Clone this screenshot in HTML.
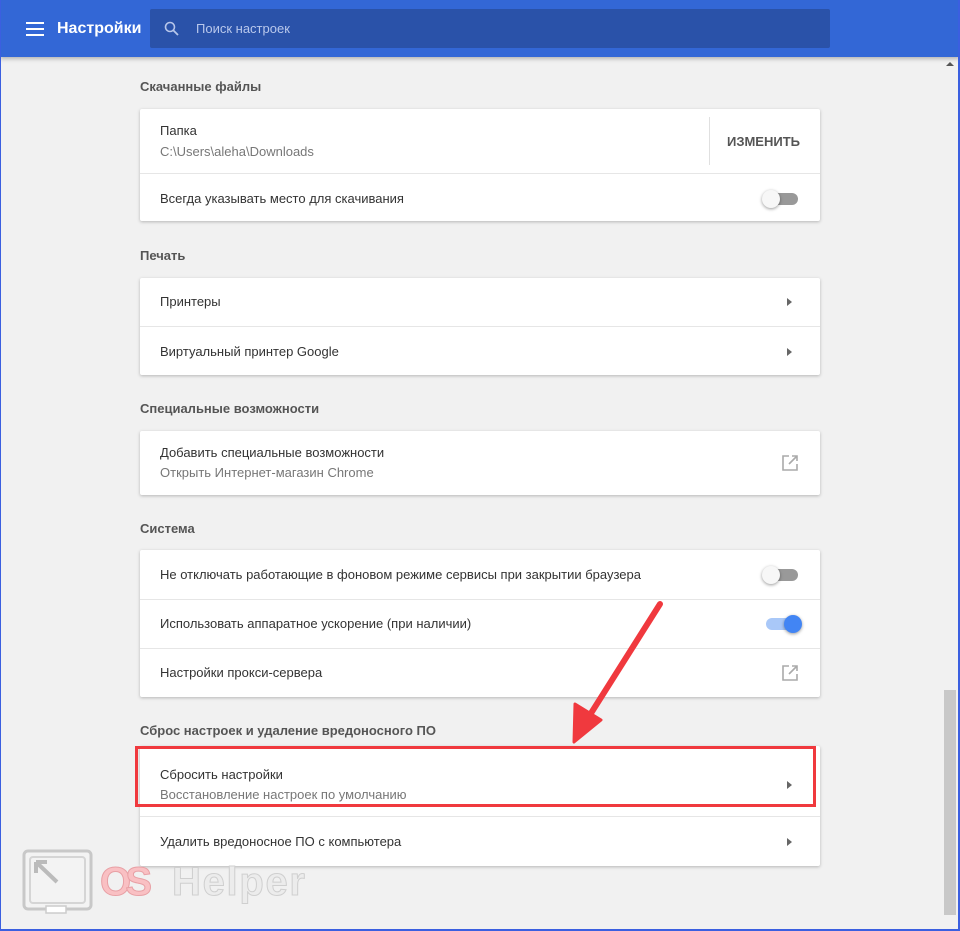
<!DOCTYPE html><html><head><meta charset="utf-8"><style>
*{margin:0;padding:0;box-sizing:border-box}
body{width:960px;height:931px;background:#f1f1f1;font-family:"Liberation Sans",sans-serif;position:relative;overflow:hidden}
.frame{position:absolute;left:0;top:0;width:960px;height:931px;border-left:1px solid #3b5fe0;border-right:2px solid #3b5fe0;border-bottom:2px solid #3b5fe0;pointer-events:none}
.hdr{position:absolute;left:0;top:0;width:960px;height:57px;background:#3367d6;box-shadow:0 2px 4px rgba(0,0,0,.25)}
.srch{position:absolute;left:150px;top:9px;width:680px;height:39px;background:#2a52a9;border-radius:2px}
.h{position:absolute;left:140px;font-size:13px;color:#555;font-weight:bold}
.card{position:absolute;left:140px;width:680px;background:#fff;box-shadow:0 1px 3px rgba(0,0,0,.25);border-radius:2px}
.row{position:relative;border-top:1px solid #e6e6e6}
.row:first-child{border-top:none}
.row .a{position:absolute;left:20px;font-size:13px;color:#333}
.row .b{position:absolute;left:20px;font-size:13px;color:#777}
.tri{position:absolute;right:28px;width:0;height:0;border-left:5px solid #666;border-top:4px solid transparent;border-bottom:4px solid transparent}
.tg{position:absolute;right:22px;width:32px;height:12px;border-radius:6px;background:#999}
.tg i{position:absolute;left:-4px;top:-3px;width:18px;height:18px;border-radius:50%;background:#f7f7f7;box-shadow:0 1px 3px rgba(0,0,0,.4)}
.on{background:#a9c8f8}.on i{left:auto;right:-4px;background:#4285f4}
.ext{position:absolute;right:22px}
</style></head><body>
<div class="hdr">
<svg style="position:absolute;left:26px;top:22px" width="18" height="14"><rect y="0" width="18" height="2" fill="#fff"/><rect y="6" width="18" height="2" fill="#fff"/><rect y="12" width="18" height="2" fill="#fff"/></svg>
<div style="position:absolute;left:57px;top:20px;font-size:16px;color:#fff;font-weight:bold">Настройки</div>
<div class="srch"><svg style="position:absolute;left:14px;top:12px" width="16" height="16"><circle cx="6" cy="6" r="4.5" stroke="#b7c6ea" stroke-width="1.6" fill="none"/><path d="M9.5 9.5L14 14" stroke="#b7c6ea" stroke-width="1.8"/></svg>
<div style="position:absolute;left:46px;top:12px;font-size:13px;color:#b9c8ec">Поиск настроек</div></div>
</div>
<div style="position:absolute;left:946px;top:62px;border-bottom:4px solid #555;border-left:4px solid transparent;border-right:4px solid transparent"></div>
<div style="position:absolute;left:944px;top:690px;width:12px;height:225px;background:#c8c8c8"></div>

<div class="h" style="top:79px">Скачанные файлы</div>
<div class="card" style="top:109px">
<div class="row" style="height:64px"><div class="a" style="top:14px">Папка</div><div class="b" style="top:35px">C:\Users\aleha\Downloads</div>
<div style="position:absolute;left:569px;top:8px;width:1px;height:48px;background:#e0e0e0"></div>
<div style="position:absolute;right:20px;top:25px;font-size:13px;color:#555;font-weight:bold">ИЗМЕНИТЬ</div></div>
<div class="row" style="height:48px"><div class="a" style="top:17px">Всегда указывать место для скачивания</div><div class="tg" style="top:19px"><i></i></div></div>
</div>

<div class="h" style="top:248px">Печать</div>
<div class="card" style="top:278px">
<div class="row" style="height:48px"><div class="a" style="top:16px">Принтеры</div><div class="tri" style="top:20px"></div></div>
<div class="row" style="height:49px"><div class="a" style="top:17px">Виртуальный принтер Google</div><div class="tri" style="top:21px"></div></div>
</div>

<div class="h" style="top:401px">Специальные возможности</div>
<div class="card" style="top:431px">
<div class="row" style="height:64px"><div class="a" style="top:14px">Добавить специальные возможности</div><div class="b" style="top:34px">Открыть Интернет-магазин Chrome</div>
<svg class="ext" style="top:24px" width="16" height="16"><path d="M7 1H1v14h14V9" fill="none" stroke="#aaa" stroke-width="1.6"/><path d="M10 1h5v5M15 1L7 9" fill="none" stroke="#aaa" stroke-width="1.6"/></svg></div>
</div>

<div class="h" style="top:521px">Система</div>
<div class="card" style="top:550px">
<div class="row" style="height:49px"><div class="a" style="top:17px">Не отключать работающие в фоновом режиме сервисы при закрытии браузера</div><div class="tg" style="top:19px"><i></i></div></div>
<div class="row" style="height:49px"><div class="a" style="top:16px">Использовать аппаратное ускорение (при наличии)</div><div class="tg on" style="top:18px"><i></i></div></div>
<div class="row" style="height:49px"><div class="a" style="top:16px">Настройки прокси-сервера</div>
<svg class="ext" style="top:16px" width="16" height="16"><path d="M7 1H1v14h14V9" fill="none" stroke="#aaa" stroke-width="1.6"/><path d="M10 1h5v5M15 1L7 9" fill="none" stroke="#aaa" stroke-width="1.6"/></svg></div>
</div>

<div class="h" style="top:723px">Сброс настроек и удаление вредоносного ПО</div>
<div class="card" style="top:746px">
<div class="row" style="height:70px"><div class="a" style="top:21px">Сбросить настройки</div><div class="b" style="top:41px">Восстановление настроек по умолчанию</div><div class="tri" style="top:35px"></div></div>
<div class="row" style="height:50px"><div class="a" style="top:17px">Удалить вредоносное ПО с компьютера</div><div class="tri" style="top:21px"></div></div>
</div>
<div style="position:absolute;left:135px;top:746px;width:681px;height:61px;border:3px solid #f0393e"></div>
<svg style="position:absolute;left:0;top:0" width="960" height="931"><path d="M660 604L588 718" stroke="#f0393e" stroke-width="6" stroke-linecap="round"/><path d="M574 742L575 704L601 720Z" fill="#f0393e" stroke="#f0393e" stroke-width="3" stroke-linejoin="round"/>
<rect x="24" y="851" width="67" height="58" rx="4" fill="#f3f3f3" stroke="#c8c8c8" stroke-width="3"/><rect x="30" y="857" width="55" height="46" rx="3" fill="none" stroke="#d5d5d5" stroke-width="2"/><rect x="46" y="906" width="20" height="7" fill="#fff" stroke="#ccc" stroke-width="1.5"/><path d="M57 882L36 862M36 862v11M36 862h11" stroke="#bbb" stroke-width="4" fill="none"/>
<text x="100" y="895" font-family="Liberation Sans" font-weight="bold" font-size="40" fill="#f9c0c3" stroke="#e8a0a5" stroke-width="1" textLength="52">OS</text>
<text x="172" y="895" font-family="Liberation Sans" font-weight="bold" font-size="40" fill="#ececec" stroke="#cfcfcf" stroke-width="1" textLength="133">Helper</text></svg>
<div class="frame"></div>
</body></html>
